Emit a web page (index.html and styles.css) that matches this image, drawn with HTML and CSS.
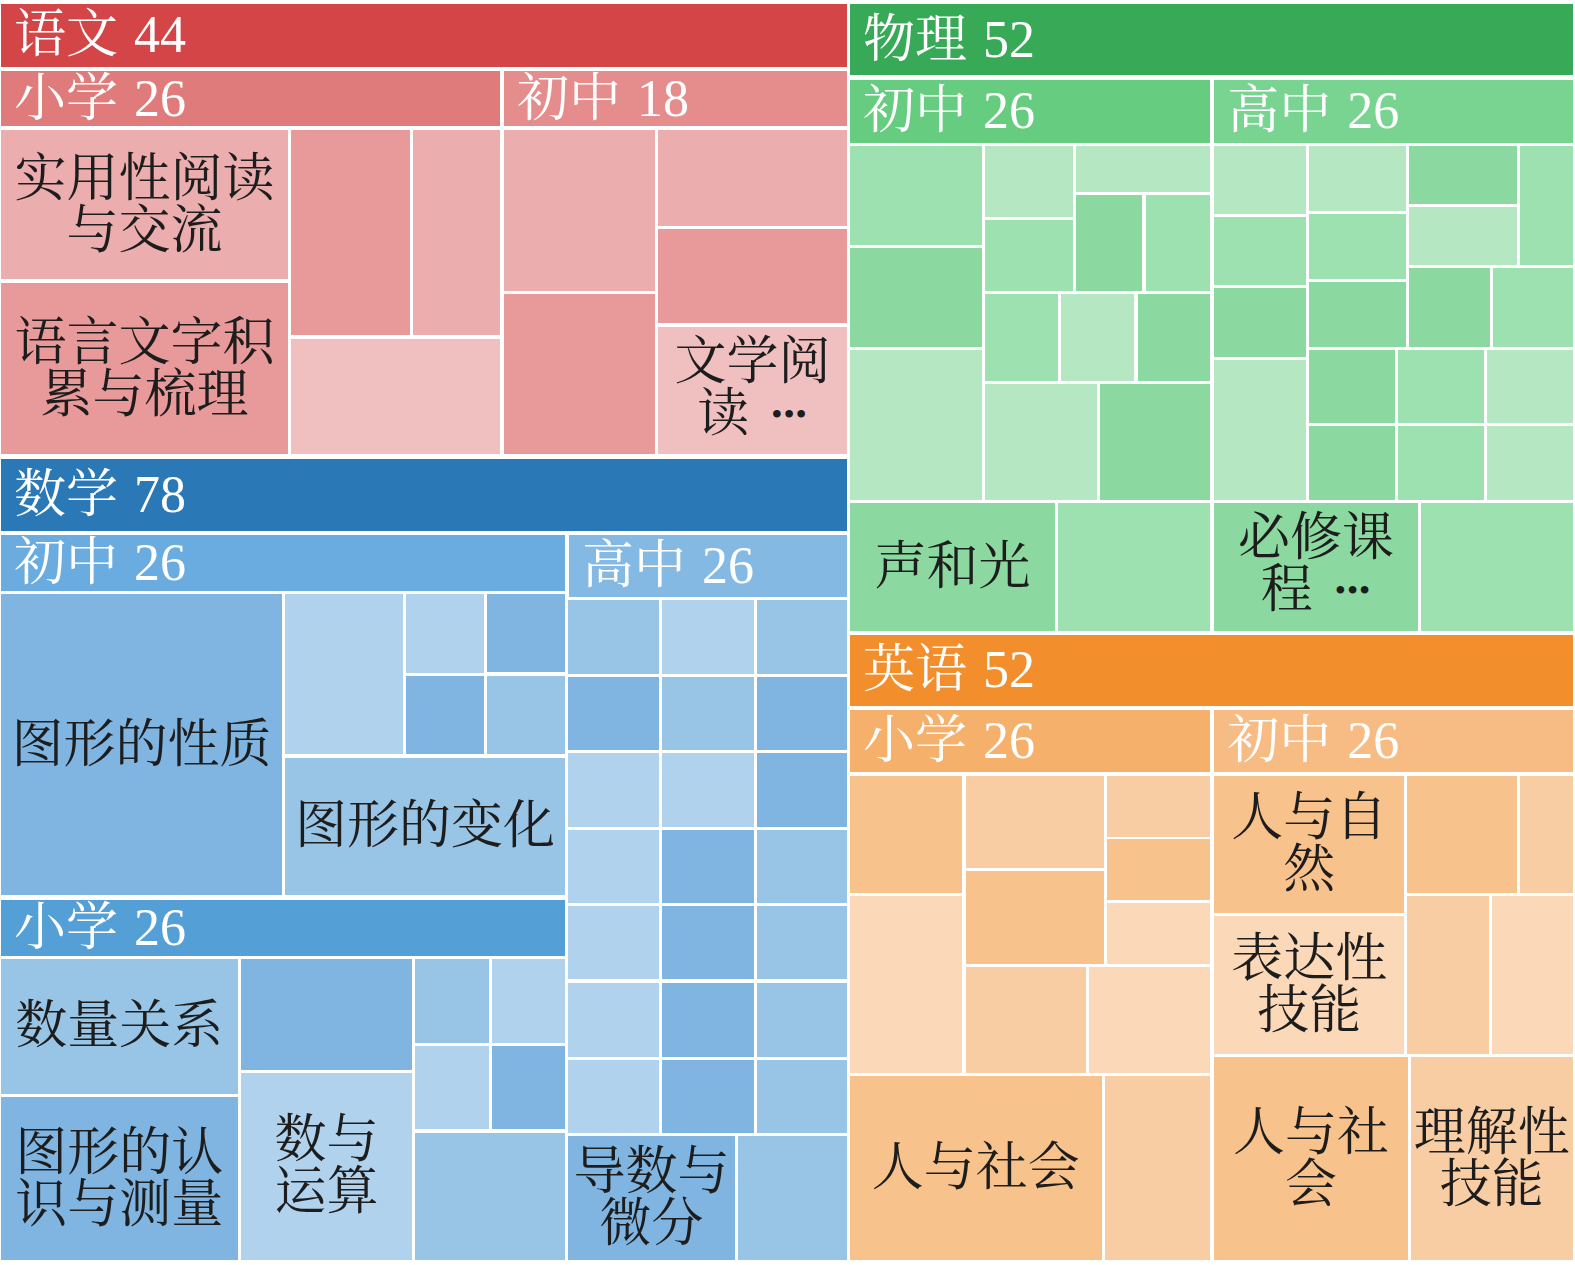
FILE: index.html
```html
<!DOCTYPE html>
<html lang="zh-CN">
<head>
<meta charset="utf-8">
<title>课程标准 Treemap</title>
<link rel="stylesheet" href="styles.css">
</head>
<body>
<div class="treemap">
  <!-- 语文 -->
  <div class="c hdr zh-h" style="left:1px;top:4px;width:845.7px;height:62.7px"><span>语文 44</span></div>
  <div class="c hdr zh-s1" style="left:1px;top:71px;width:499px;height:55px"><span>小学 26</span></div>
  <div class="c hdr zh-s2" style="left:504px;top:71px;width:342.7px;height:55px"><span>初中 18</span></div>
  <div class="c zh-l" style="left:1px;top:130px;width:287px;height:149.3px"><span class="lbl">实用性阅读<br>与交流</span></div>
  <div class="c zh-m" style="left:1px;top:283px;width:287px;height:171.3px"><span class="lbl">语言文字积<br>累与梳理</span></div>
  <div class="c zh-m" style="left:291px;top:130px;width:118.7px;height:205.3px"></div>
  <div class="c zh-l" style="left:413.3px;top:130px;width:86.7px;height:205.3px"></div>
  <div class="c zh-xl" style="left:291px;top:339px;width:209px;height:115.3px"></div>
  <div class="c zh-l" style="left:504px;top:130px;width:150.7px;height:161px"></div>
  <div class="c zh-m" style="left:504px;top:294px;width:150.7px;height:160.3px"></div>
  <div class="c zh-l" style="left:658.3px;top:130px;width:188.4px;height:96px"></div>
  <div class="c zh-m" style="left:658.3px;top:229px;width:188.4px;height:94.3px"></div>
  <div class="c zh-xl" style="left:658.3px;top:327px;width:188.4px;height:127.3px"><span class="lbl">文学阅<br>读<span class="dots">•••</span></span></div>

  <!-- 物理 -->
  <div class="c hdr ph-h" style="left:850px;top:4px;width:722.7px;height:71px"><span>物理 52</span></div>
  <div class="c hdr ph-s1" style="left:850px;top:80px;width:360px;height:62.7px"><span>初中 26</span></div>
  <div class="c hdr ph-s2" style="left:1214.3px;top:80px;width:358.4px;height:62.7px"><span>高中 26</span></div>
  <div class="c ph-m" style="left:850px;top:145.7px;width:132.3px;height:99.3px"></div>
  <div class="c ph-d" style="left:850px;top:248px;width:132.3px;height:99px"></div>
  <div class="c ph-l" style="left:850px;top:350px;width:132.3px;height:150px"></div>
  <div class="c ph-l" style="left:985px;top:145.7px;width:88.4px;height:71.7px"></div>
  <div class="c ph-l" style="left:1075.7px;top:145.7px;width:134.6px;height:46.3px"></div>
  <div class="c ph-m" style="left:985px;top:220px;width:88.4px;height:71px"></div>
  <div class="c ph-d" style="left:1075.7px;top:195px;width:66.6px;height:96px"></div>
  <div class="c ph-m" style="left:1145.5px;top:195px;width:64.8px;height:96px"></div>
  <div class="c ph-m" style="left:985px;top:294px;width:73.4px;height:86.7px"></div>
  <div class="c ph-l" style="left:1061px;top:294px;width:73.4px;height:86.7px"></div>
  <div class="c ph-d" style="left:1137.5px;top:294px;width:72.8px;height:86.7px"></div>
  <div class="c ph-l" style="left:985px;top:384px;width:111.5px;height:116px"></div>
  <div class="c ph-d" style="left:1099.5px;top:384px;width:110.8px;height:116px"></div>
  <div class="c ph-d" style="left:850px;top:503.3px;width:205px;height:127.4px"><span class="lbl">声和光</span></div>
  <div class="c ph-m" style="left:1058px;top:503.3px;width:152.3px;height:127.4px"></div>
  <div class="c ph-l" style="left:1214.3px;top:145.7px;width:91.4px;height:68.3px"></div>
  <div class="c ph-m" style="left:1214.3px;top:217px;width:91.4px;height:68px"></div>
  <div class="c ph-d" style="left:1214.3px;top:288px;width:91.4px;height:68.7px"></div>
  <div class="c ph-l" style="left:1214.3px;top:359.7px;width:91.4px;height:140.3px"></div>
  <div class="c ph-l" style="left:1309px;top:145.7px;width:97px;height:65.3px"></div>
  <div class="c ph-m" style="left:1309px;top:214px;width:97px;height:65px"></div>
  <div class="c ph-d" style="left:1309px;top:282px;width:97px;height:64.7px"></div>
  <div class="c ph-d" style="left:1409px;top:145.7px;width:108px;height:58px"></div>
  <div class="c ph-l" style="left:1409px;top:206.7px;width:108px;height:58.3px"></div>
  <div class="c ph-m" style="left:1520px;top:145.7px;width:52.7px;height:119.3px"></div>
  <div class="c ph-d" style="left:1409px;top:267.7px;width:81px;height:79px"></div>
  <div class="c ph-m" style="left:1493px;top:267.7px;width:79.7px;height:79px"></div>
  <div class="c ph-d" style="left:1309px;top:349.7px;width:86px;height:73px"></div>
  <div class="c ph-m" style="left:1398px;top:349.7px;width:86px;height:73px"></div>
  <div class="c ph-l" style="left:1487px;top:349.7px;width:85.7px;height:73px"></div>
  <div class="c ph-d" style="left:1309px;top:425.7px;width:86px;height:74.3px"></div>
  <div class="c ph-m" style="left:1398px;top:425.7px;width:86px;height:74.3px"></div>
  <div class="c ph-l" style="left:1487px;top:425.7px;width:85.7px;height:74.3px"></div>
  <div class="c ph-d" style="left:1214.3px;top:503.3px;width:203.4px;height:127.4px"><span class="lbl">必修课<br>程<span class="dots">•••</span></span></div>
  <div class="c ph-m" style="left:1421px;top:503.3px;width:151.7px;height:127.4px"></div>

  <!-- 数学 -->
  <div class="c hdr ma-h" style="left:1px;top:459px;width:845.7px;height:71.7px"><span>数学 78</span></div>
  <div class="c hdr ma-s1" style="left:1px;top:535px;width:564px;height:55.7px"><span>初中 26</span></div>
  <div class="c hdr ma-s2" style="left:569px;top:535px;width:277.7px;height:61.7px"><span>高中 26</span></div>
  <div class="c ma-d" style="left:1px;top:594px;width:281px;height:301px"><span class="lbl">图形的性质</span></div>
  <div class="c ma-l" style="left:285px;top:594px;width:117.7px;height:160.3px"></div>
  <div class="c ma-l" style="left:406px;top:594px;width:77.7px;height:79px"></div>
  <div class="c ma-d" style="left:487px;top:594px;width:78px;height:78.3px"></div>
  <div class="c ma-d" style="left:406px;top:676px;width:77.7px;height:78.3px"></div>
  <div class="c ma-m" style="left:487px;top:676px;width:78px;height:78.3px"></div>
  <div class="c ma-m" style="left:285px;top:757.7px;width:280px;height:137.3px"><span class="lbl">图形的变化</span></div>

  <div class="c ma-m" style="left:568.3px;top:600px;width:90.7px;height:74px"></div>
  <div class="c ma-l" style="left:662.3px;top:600px;width:91.4px;height:74px"></div>
  <div class="c ma-m" style="left:757px;top:600px;width:89.7px;height:74px"></div>
  <div class="c ma-d" style="left:568.3px;top:677px;width:90.7px;height:72.7px"></div>
  <div class="c ma-m" style="left:662.3px;top:677px;width:91.4px;height:72.7px"></div>
  <div class="c ma-d" style="left:757px;top:677px;width:89.7px;height:72.7px"></div>
  <div class="c ma-l" style="left:568.3px;top:752.7px;width:90.7px;height:74px"></div>
  <div class="c ma-l" style="left:662.3px;top:752.7px;width:91.4px;height:74px"></div>
  <div class="c ma-d" style="left:757px;top:752.7px;width:89.7px;height:74px"></div>
  <div class="c ma-l" style="left:568.3px;top:830px;width:90.7px;height:72.7px"></div>
  <div class="c ma-d" style="left:662.3px;top:830px;width:91.4px;height:72.7px"></div>
  <div class="c ma-m" style="left:757px;top:830px;width:89.7px;height:72.7px"></div>
  <div class="c ma-l" style="left:568.3px;top:906px;width:90.7px;height:73.3px"></div>
  <div class="c ma-d" style="left:662.3px;top:906px;width:91.4px;height:73.3px"></div>
  <div class="c ma-m" style="left:757px;top:906px;width:89.7px;height:73.3px"></div>
  <div class="c ma-l" style="left:568.3px;top:983px;width:90.7px;height:74px"></div>
  <div class="c ma-d" style="left:662.3px;top:983px;width:91.4px;height:74px"></div>
  <div class="c ma-m" style="left:757px;top:983px;width:89.7px;height:74px"></div>
  <div class="c ma-l" style="left:568.3px;top:1060px;width:90.7px;height:72.7px"></div>
  <div class="c ma-d" style="left:662.3px;top:1060px;width:91.4px;height:72.7px"></div>
  <div class="c ma-m" style="left:757px;top:1060px;width:89.7px;height:72.7px"></div>
  <div class="c ma-d" style="left:568.3px;top:1136px;width:166.4px;height:124px"><span class="lbl">导数与<br>微分</span></div>
  <div class="c ma-m" style="left:738.3px;top:1136px;width:108.4px;height:124px"></div>

  <div class="c hdr ma-s3" style="left:1px;top:900px;width:564px;height:55.7px"><span>小学 26</span></div>
  <div class="c ma-m" style="left:1px;top:959px;width:236.7px;height:134.7px"><span class="lbl">数量关系</span></div>
  <div class="c ma-d" style="left:1px;top:1097px;width:236.7px;height:163px"><span class="lbl">图形的认<br>识与测量</span></div>
  <div class="c ma-d" style="left:241px;top:959px;width:171px;height:111px"></div>
  <div class="c ma-l" style="left:241px;top:1072.7px;width:171px;height:187.3px"><span class="lbl">数与<br>运算</span></div>
  <div class="c ma-m" style="left:415px;top:959px;width:73.7px;height:84px"></div>
  <div class="c ma-l" style="left:492px;top:959px;width:73px;height:84px"></div>
  <div class="c ma-l" style="left:415px;top:1046px;width:73.7px;height:83.3px"></div>
  <div class="c ma-d" style="left:492px;top:1046px;width:73px;height:83.3px"></div>
  <div class="c ma-m" style="left:415px;top:1133px;width:150px;height:127px"></div>

  <!-- 英语 -->
  <div class="c hdr en-h" style="left:850px;top:635px;width:722.7px;height:70.7px"><span>英语 52</span></div>
  <div class="c hdr en-s1" style="left:850px;top:710px;width:360px;height:62.3px"><span>小学 26</span></div>
  <div class="c hdr en-s2" style="left:1214.3px;top:710px;width:358.4px;height:62.3px"><span>初中 26</span></div>
  <div class="c en-d" style="left:850px;top:776px;width:112.3px;height:116.7px"></div>
  <div class="c en-l" style="left:850px;top:896px;width:112.3px;height:176.7px"></div>
  <div class="c en-m" style="left:965.7px;top:776px;width:138.3px;height:91.5px"></div>
  <div class="c en-d" style="left:965.7px;top:871px;width:138.3px;height:93px"></div>
  <div class="c en-m" style="left:1107px;top:776px;width:103px;height:60.5px"></div>
  <div class="c en-d" style="left:1107px;top:839px;width:103px;height:61px"></div>
  <div class="c en-l" style="left:1107px;top:903px;width:103px;height:61px"></div>
  <div class="c en-m" style="left:965.7px;top:967.3px;width:120.3px;height:105.4px"></div>
  <div class="c en-l" style="left:1089.3px;top:967.3px;width:120.7px;height:105.4px"></div>
  <div class="c en-d" style="left:850px;top:1076px;width:251.7px;height:184px"><span class="lbl">人与社会</span></div>
  <div class="c en-m" style="left:1105px;top:1076px;width:105px;height:184px"></div>
  <div class="c en-d" style="left:1214.3px;top:776px;width:189.7px;height:136.7px"><span class="lbl">人与自<br>然</span></div>
  <div class="c en-l" style="left:1214.3px;top:916px;width:189.7px;height:137.7px"><span class="lbl">表达性<br>技能</span></div>
  <div class="c en-d" style="left:1407.3px;top:776px;width:109.4px;height:116.7px"></div>
  <div class="c en-m" style="left:1520px;top:776px;width:52.7px;height:116.7px"></div>
  <div class="c en-m" style="left:1407.3px;top:896px;width:81.4px;height:157.7px"></div>
  <div class="c en-l" style="left:1492px;top:896px;width:80.7px;height:157.7px"></div>
  <div class="c en-d" style="left:1214.3px;top:1057.3px;width:193.4px;height:202.7px"><span class="lbl">人与社<br>会</span></div>
  <div class="c en-m" style="left:1411px;top:1057.3px;width:161.7px;height:202.7px"><span class="lbl">理解性<br>技能</span></div>
</div>
</body>
</html>
```

FILE: styles.css
```css
html, body {
  margin: 0;
  padding: 0;
  background: #ffffff;
}

.treemap {
  position: relative;
  width: 1575px;
  height: 1265px;
  overflow: hidden;
  font-family: "Liberation Serif", "Noto Serif CJK SC", "Noto Sans CJK SC", serif;
}

.c {
  position: absolute;
  box-sizing: border-box;
  display: flex;
  align-items: center;
  justify-content: center;
  overflow: hidden;
}

.lbl {
  display: block;
  text-align: center;
  font-size: 52px;
  line-height: 52px;
  color: #1d1d1d;
  white-space: nowrap;
}

.hdr {
  justify-content: flex-start;
  padding-left: 13px;
  color: #ffffff;
  font-size: 52px;
  line-height: 1;
  white-space: nowrap;
  word-spacing: 3px;
}

.dots {
  font-family: "Liberation Serif", serif;
  font-size: 32px;
  margin-left: 22px;
  letter-spacing: 1px;
  position: relative;
  top: -6px;
}

/* 语文 */
.zh-h  { background: #d44547; }
.zh-s1 { background: #e07b7b; }
.zh-s2 { background: #e58c8c; }
.zh-m  { background: #e8999a; }
.zh-l  { background: #ebadad; }
.zh-xl { background: #f0bfc0; }

/* 物理 */
.ph-h  { background: #37a957; }
.ph-s1 { background: #66cd80; }
.ph-s2 { background: #79d491; }
.ph-d  { background: #8bd9a0; }
.ph-m  { background: #9de1b1; }
.ph-l  { background: #b5e7c3; }

/* 数学 */
.ma-h  { background: #2a78b5; }
.ma-s1 { background: #6aace0; }
.ma-s2 { background: #84b9e3; }
.ma-s3 { background: #559fd7; }
.ma-d  { background: #80b5e2; }
.ma-m  { background: #98c4e6; }
.ma-l  { background: #b0d2ed; }

/* 英语 */
.en-h  { background: #f28e2c; }
.en-s1 { background: #f5b06c; }
.en-s2 { background: #f6bc84; }
.en-d  { background: #f7c28c; }
.en-m  { background: #f8cda3; }
.en-l  { background: #fad8b8; }
```
